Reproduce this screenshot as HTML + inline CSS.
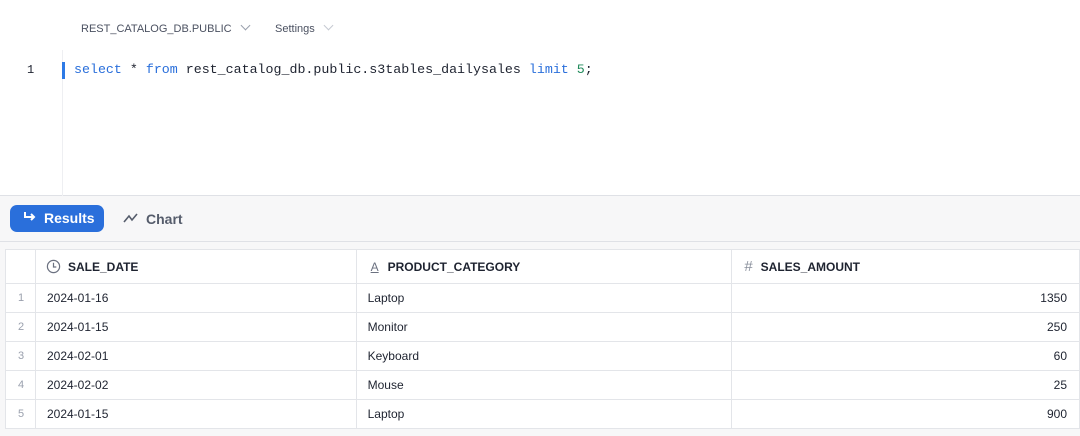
<!DOCTYPE html>
<html><head><style>
*{margin:0;padding:0;box-sizing:border-box}
body{width:1080px;height:436px;overflow:hidden;background:#f7f7f8;font-family:"Liberation Sans",sans-serif;position:relative}
.ed{position:absolute;left:0;top:0;width:1080px;height:196px;background:#fff;border-bottom:1px solid #dfe1e6}
.gut{position:absolute;left:62px;top:50px;width:1px;height:146px;background:#eeeff2}
.tb{position:absolute;font-size:11px;color:#4b5161;top:23px}
.chev{display:inline-block;width:7px;height:7px;border-right:1.3px solid #9aa0ad;border-bottom:1.3px solid #9aa0ad;transform:rotate(45deg);margin-left:10px;position:relative;top:-3px}
.code{position:absolute;left:74px;top:62px;font-family:"Liberation Mono",monospace;font-size:13.3px;color:#1e2330;white-space:pre}
.kw{color:#2a6fdb}.num{color:#1f8a5a}
.ln{position:absolute;left:27px;top:63px;font-size:12px;color:#1e2330;font-family:"Liberation Mono",monospace}
.cur{position:absolute;left:62px;top:62px;width:3px;height:17px;background:#2d7ae6}
.btn{position:absolute;left:10px;top:205px;width:94px;height:27px;background:#2a6fdb;border-radius:7px;color:#fff;font-size:14px;font-weight:bold;line-height:27px;padding-left:34px}
.chart{position:absolute;left:146px;top:211px;font-size:14px;color:#555c6b;font-weight:bold}
.line2{position:absolute;left:0;top:241px;width:1080px;height:1px;background:#dfe1e6}
table{position:absolute;left:5px;top:249px;border-collapse:collapse;background:#fff;font-size:12px;color:#1e2330}
td,th{border:1px solid #e3e5e9;height:29px;padding:0 11px;text-align:left}
th{height:34px;font-weight:bold;font-size:12px}
td.n{color:#9aa0ad;padding:0 0 0 12px;font-size:11px}
td.r{text-align:right;padding-right:12px}
</style></head><body>
<div class="ed">
<div class="tb" style="left:81px">REST_CATALOG_DB.PUBLIC<span class="chev"></span></div>
<div class="tb" style="left:275px">Settings<span class="chev" style="border-color:#c5c9d1"></span></div>
<div class="gut"></div>
<div class="ln">1</div><div class="cur"></div>
<div class="code"><span class="kw">select</span> * <span class="kw">from</span> rest_catalog_db.public.s3tables_dailysales <span class="kw">limit</span> <span class="num">5</span>;</div>
</div>
<div class="btn"><svg style="position:absolute;left:12px;top:6px" width="16" height="14" viewBox="0 0 16 14"><path d="M3 1v5h9M9 3l3 3-3 3" fill="none" stroke="#fff" stroke-width="2"/></svg>Results</div>
<svg style="position:absolute;left:123px;top:212px" width="16" height="12" viewBox="0 0 16 12"><path d="M1 10l5-6 3 4 5-6" fill="none" stroke="#555c6b" stroke-width="1.6"/></svg>
<div class="chart">Chart</div>
<div class="line2"></div>
<table>
<tr><th style="width:30px"></th>
<th style="width:321px;padding-left:10px"><svg width="15" height="15" viewBox="0 0 16 16" style="vertical-align:-3px;margin-right:7px"><circle cx="8" cy="8" r="6.5" fill="none" stroke="#6b7180" stroke-width="1.3"/><path d="M8 4v4.5h3" fill="none" stroke="#6b7180" stroke-width="1.3"/></svg>SALE_DATE</th>
<th style="width:376px;padding-left:14px"><span style="font-weight:normal;color:#6b7180;text-decoration:underline;margin-right:9px">A</span>PRODUCT_CATEGORY</th>
<th style="width:348px;padding-left:12px"><span style="font-weight:normal;color:#8a909c;font-size:15px;margin-right:8px">#</span>SALES_AMOUNT</th></tr>
<tr><td class="n">1</td><td>2024-01-16</td><td>Laptop</td><td class="r">1350</td></tr>
<tr><td class="n">2</td><td>2024-01-15</td><td>Monitor</td><td class="r">250</td></tr>
<tr><td class="n">3</td><td>2024-02-01</td><td>Keyboard</td><td class="r">60</td></tr>
<tr><td class="n">4</td><td>2024-02-02</td><td>Mouse</td><td class="r">25</td></tr>
<tr><td class="n">5</td><td>2024-01-15</td><td>Laptop</td><td class="r">900</td></tr>
</table>
</body></html>
